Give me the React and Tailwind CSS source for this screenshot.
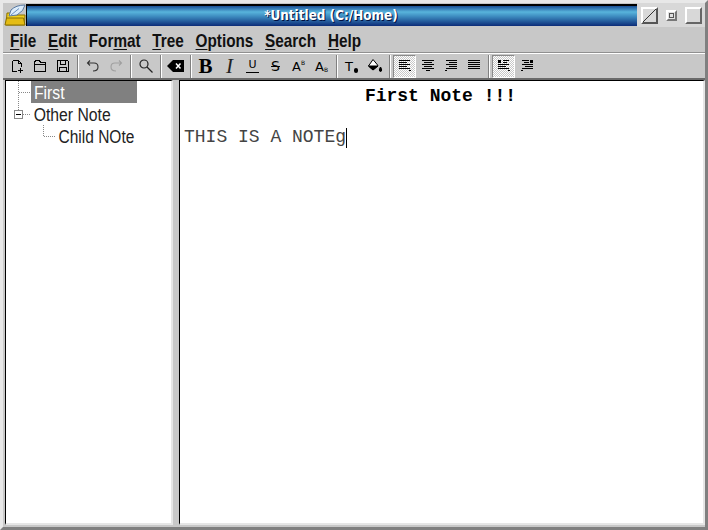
const Ico = ({ children }) => (
  <svg width="16" height="16" viewBox="0 0 16 16" fill="none" stroke="#000" strokeWidth="1" shapeRendering="crispEdges">
    {children}
  </svg>
);

const Btn = ({ active, children }) => (
  <div
    className={
      "w-[23px] h-[23px] flex items-center justify-center shrink-0 " +
      (active
        ? "border border-t-[#8a8a8a] border-l-[#8a8a8a] border-r-white border-b-white bg-[repeating-conic-gradient(#ffffff_0_25%,#c8c8c8_0_50%)] bg-[length:2px_2px]"
        : "")
    }
  >
    {children}
  </div>
);

const Sep = () => (
  <div className="w-[7px] h-[23px] flex justify-center shrink-0">
    <div className="w-[2px] h-full border-l border-l-[#808080] border-r border-r-white" />
  </div>
);

const Lines = ({ rows }) => (
  <Ico>
    {rows.map((r, i) => (
      <path key={i} d={`M${r[0]} ${r[2]}.5H${r[1]}`} />
    ))}
  </Ico>
);

const rows = (a) => a.map((r, i) => [r[0], r[1], 2 + i * 2]);

function Toolbar() {
  return (
    <div className="h-[24px] flex items-center pl-[2px]">
      <Btn>
        <Ico>
          <path d="M3.5 2.5H9.5L12.5 5.5V8.5M9.5 2.5V5.5H12.5M3.5 2.5V13.5H7.5M11.5 10V15M9 12.5H14" />
        </Ico>
      </Btn>
      <Btn>
        <Ico>
          <path d="M2.5 4.5V13.5H13.5V4.5H8.5L7.5 2.5H3.5L2.5 4.5ZM2.5 6.5H13.5" />
        </Ico>
      </Btn>
      <Btn>
        <Ico>
          <path d="M2.5 2.5H12.5L13.5 3.5V13.5H2.5ZM5.5 2.5V6.5H10.5V2.5M4.5 13.5V9.5H11.5V13.5" />
        </Ico>
      </Btn>
      <Sep />
      <Btn>
        <svg width="16" height="16" viewBox="0 0 16 16" fill="none" stroke="#333" strokeWidth="1.1">
          <path d="M5 2.5L2.5 5L5 7.5M3 5H9Q13 5 13 9Q13 13 8 13" />
        </svg>
      </Btn>
      <Btn>
        <svg width="16" height="16" viewBox="0 0 16 16" fill="none" stroke="#a0a0a0" strokeWidth="1.1">
          <path d="M11 2.5L13.5 5L11 7.5M13 5H7Q3 5 3 9Q3 13 8 13" />
        </svg>
      </Btn>
      <Sep />
      <Btn>
        <svg width="16" height="16" viewBox="0 0 16 16" fill="none" stroke="#222" strokeWidth="1.2">
          <circle cx="6" cy="6" r="4" />
          <path d="M9 9L14.5 14.5" />
        </svg>
      </Btn>
      <Sep />
      <Btn>
        <svg width="18" height="14" viewBox="0 0 18 14">
          <path d="M6 1H17V13H6L0 7Z" fill="#000" />
          <path d="M9 4.5L13.5 9.5M13.5 4.5L9 9.5" stroke="#fff" strokeWidth="1.5" />
        </svg>
      </Btn>
      <div className="w-[8px] h-[23px] flex justify-center shrink-0">
        <div className="w-[2px] h-full border-l border-l-[#808080] border-r border-r-white" />
      </div>
      <Btn>
        <span className="font-['Liberation_Serif',serif] font-bold text-[21px] leading-none text-black -ml-[2px]">B</span>
      </Btn>
      <Btn>
        <span className="font-['Liberation_Serif',serif] italic text-[21px] leading-none text-[#222]">I</span>
      </Btn>
      <Btn>
        <span className="font-['DejaVu_Sans',sans-serif] text-[11px] leading-none text-black border-b border-black pb-[2px] px-[2px]">U</span>
      </Btn>
      <Btn>
        <span className="font-['DejaVu_Sans',sans-serif] text-[14px] leading-none text-black line-through">S</span>
      </Btn>
      <Btn>
        <span className="font-['DejaVu_Sans',sans-serif] text-[13px] leading-none text-black flex items-start">
          A<span className="text-[6px]">B</span>
        </span>
      </Btn>
      <Btn>
        <span className="font-['DejaVu_Sans',sans-serif] text-[13px] leading-none text-black flex items-end">
          A<span className="text-[6px]">B</span>
        </span>
      </Btn>
      <Sep />
      <Btn>
        <span className="font-['DejaVu_Sans',sans-serif] text-[13px] leading-none text-black flex items-end">
          T<span className="w-[4px] h-[5px] rounded-full bg-black ml-[1px]" />
        </span>
      </Btn>
      <Btn>
        <svg width="16" height="16" viewBox="0 0 16 16" fill="none" stroke="#000">
          <path d="M6 1.5L1.5 8L6 12L11 7.5Z" fill="#fff" />
          <path d="M1.5 8H11L6 12Z" fill="#000" />
          <path d="M13.5 9C12 11 12 13.5 13.5 13.5C15 13.5 15 11 13.5 9Z" fill="#000" />
        </svg>
      </Btn>
      <Sep />
      <Btn active>
        <Lines rows={rows([[2, 13], [2, 10], [2, 13], [2, 10], [2, 13], [12, 14]])} />
      </Btn>
      <Btn>
        <Lines rows={rows([[2, 14], [4, 12], [2, 14], [4, 12], [2, 14], [6, 10]])} />
      </Btn>
      <Btn>
        <Lines rows={rows([[3, 14], [6, 14], [3, 14], [6, 14], [3, 14], [2, 4]])} />
      </Btn>
      <Btn>
        <Lines rows={rows([[2, 14], [2, 14], [2, 14], [2, 14], [2, 14]])} />
      </Btn>
      <Sep />
      <Btn active>
        <Ico>
          <path d="M2 2h3v3H2z" fill="#000" stroke="none" />
          <path d="M7 2.5H13M7 4.5H11M2 6.5H13M2 8.5H10M2 10.5H13M12 12.5H14" />
        </Ico>
      </Btn>
      <Btn>
        <Ico>
          <path d="M11 2h3v3h-3z" fill="#000" stroke="none" />
          <path d="M3 2.5H10M5 4.5H10M3 6.5H14M6 8.5H14M3 10.5H14M2 12.5H4" />
        </Ico>
      </Btn>
    </div>
  );
}

export default function App() {
  const menus = [
    ["", "F", "ile"],
    ["", "E", "dit"],
    ["For", "m", "at"],
    ["", "T", "ree"],
    ["", "O", "ptions"],
    ["", "S", "earch"],
    ["", "H", "elp"],
  ];

  return (
    <div className="w-[708px] h-[530px] bg-[#c8c8c8] flex flex-col overflow-hidden border-t-[3px] border-l-[3px] border-[#e8e8e8] border-r-[3px] border-r-[#808080] border-b-[3px] border-b-[#808080] font-['Liberation_Sans',sans-serif]">
      {/* barra de titulo */}
      <div className="h-[24px] flex items-center shrink-0">
        <div className="w-[23px] h-[24px] flex items-center justify-center shrink-0">
          <svg width="22" height="22" viewBox="0 0 22 22">
            <path d="M2 21L3 9H9L10 11H21L20.5 21Z" fill="#f0d020" stroke="#8a7000" />
            <path d="M1 21L2.5 14H19.5L21 21Z" fill="#e4bc14" stroke="#8a7000" />
            <path d="M5 12L7 6Q12 1 21 1Q20 7 13 11Z" fill="#dcecfa" stroke="#5878a0" />
            <path d="M7 11L15 4.5" stroke="#6a90c0" fill="none" />
          </svg>
        </div>
        <div className="flex-1 h-[22px] flex items-center justify-center pr-[2px] border-t-2 border-l border-black bg-[linear-gradient(to_bottom,#1a4f96_0%,#58b4dc_30%,#3a86bc_55%,#0c2c78_100%)]">
          <span className="text-white text-[13.4px] font-['DejaVu_Sans_Condensed','DejaVu_Sans',sans-serif] font-bold [text-shadow:1px_1px_0_#001040]">*Untitled (C:/Home)</span>
        </div>
        <div className="w-[68px] h-[24px] flex items-center gap-2 pl-[4px] shrink-0 bg-[#d8d8d8]">
          <div className="w-[17px] h-[17px] border-2 border-t-white border-l-white border-r-[#555] border-b-[#555] flex items-center justify-center">
            <svg width="13" height="13" viewBox="0 0 13 13" fill="none" stroke="#333">
              <path d="M0 13L13 0" />
            </svg>
          </div>
          <div className="w-[11px] h-[11px] border-2 border-t-white border-l-white border-r-[#777] border-b-[#777] bg-[#e0e0e0] flex items-center justify-center">
            <div className="w-[5px] h-[5px] border border-[#555]" />
          </div>
          <div className="w-[17px] h-[17px] border-2 border-t-white border-l-white border-r-[#666] border-b-[#666]" />
        </div>
      </div>

      {/* menu */}
      <div className="h-[26px] pl-[7px] shrink-0 border-b border-b-[#909090] shadow-[0_1px_0_#ffffff]">
        <div className="h-full flex items-center gap-[14.6px] pt-[1px] origin-left scale-x-[0.805]">
          {menus.map(([a, b, c]) => (
            <span key={b} className="text-[19px] font-bold text-[#111] leading-none">
              {a}
              <span className="underline underline-offset-2">{b}</span>
              {c}
            </span>
          ))}
        </div>
      </div>

      <div className="mt-[1px] shrink-0">
        <Toolbar />
      </div>

      {/* paneles */}
      <div className="flex-1 flex min-h-0 border-t-2 border-t-[#6a6a6a]">
        <div className="w-[168px] ml-[2px] mb-[2px] bg-white border-l border-l-black border-t border-t-black border-r-2 border-r-[#e6e6e6] border-b-2 border-b-[#e6e6e6] text-[18px] text-[#222] leading-[22px] overflow-hidden shrink-0">
          <div className="h-[22px] flex items-center">
            <svg width="25" height="22" viewBox="0 0 25 22" fill="none" stroke="#888" strokeDasharray="1 1" shapeRendering="crispEdges" className="shrink-0">
              <path d="M12.5 0V22M13 11.5H25" />
            </svg>
            <span className="bg-[#808080] text-white w-[106px] pl-[3px] h-[22px]">
              <span className="block pt-[1px] origin-left scale-x-[0.875]">First</span>
            </span>
          </div>
          <div className="h-[22px] flex items-center">
            <svg width="25" height="22" viewBox="0 0 25 22" fill="none" stroke="#888" shapeRendering="crispEdges" className="shrink-0">
              <path d="M12.5 0V7" strokeDasharray="1 1" />
              <rect x="8.5" y="7.5" width="8" height="8" fill="#fff" />
              <path d="M10 11.5H15" stroke="#000" />
              <path d="M17 11.5H25" strokeDasharray="1 1" />
            </svg>
            <span className="pl-[3px] pt-[1px] origin-left scale-x-[0.875]">Other Note</span>
          </div>
          <div className="h-[22px] flex items-center">
            <svg width="50" height="22" viewBox="0 0 50 22" fill="none" stroke="#888" strokeDasharray="1 1" shapeRendering="crispEdges" className="shrink-0">
              <path d="M37.5 0V11.5H50" />
            </svg>
            <span className="pl-[3px] pt-[1px] origin-left scale-x-[0.86]">Child NOte</span>
          </div>
        </div>

        <div className="w-[6px] shrink-0" />

        <div className="flex-1 mb-[2px] bg-white border-l border-l-black border-t border-t-black border-r-2 border-r-[#e6e6e6] border-b-2 border-b-[#e6e6e6] pl-[4px] pr-[6px] font-['Liberation_Mono',monospace] text-[18px] text-[#444] leading-[21px] overflow-hidden">
          <p className="text-center font-bold text-black h-[21px] mt-[5px]">First Note !!!</p>
          <p className="h-[20px]" />
          <p className="flex items-center">
            THIS IS A NOTEg
            <span className="w-[1px] h-[20px] bg-black" />
          </p>
        </div>
      </div>
    </div>
  );
}
